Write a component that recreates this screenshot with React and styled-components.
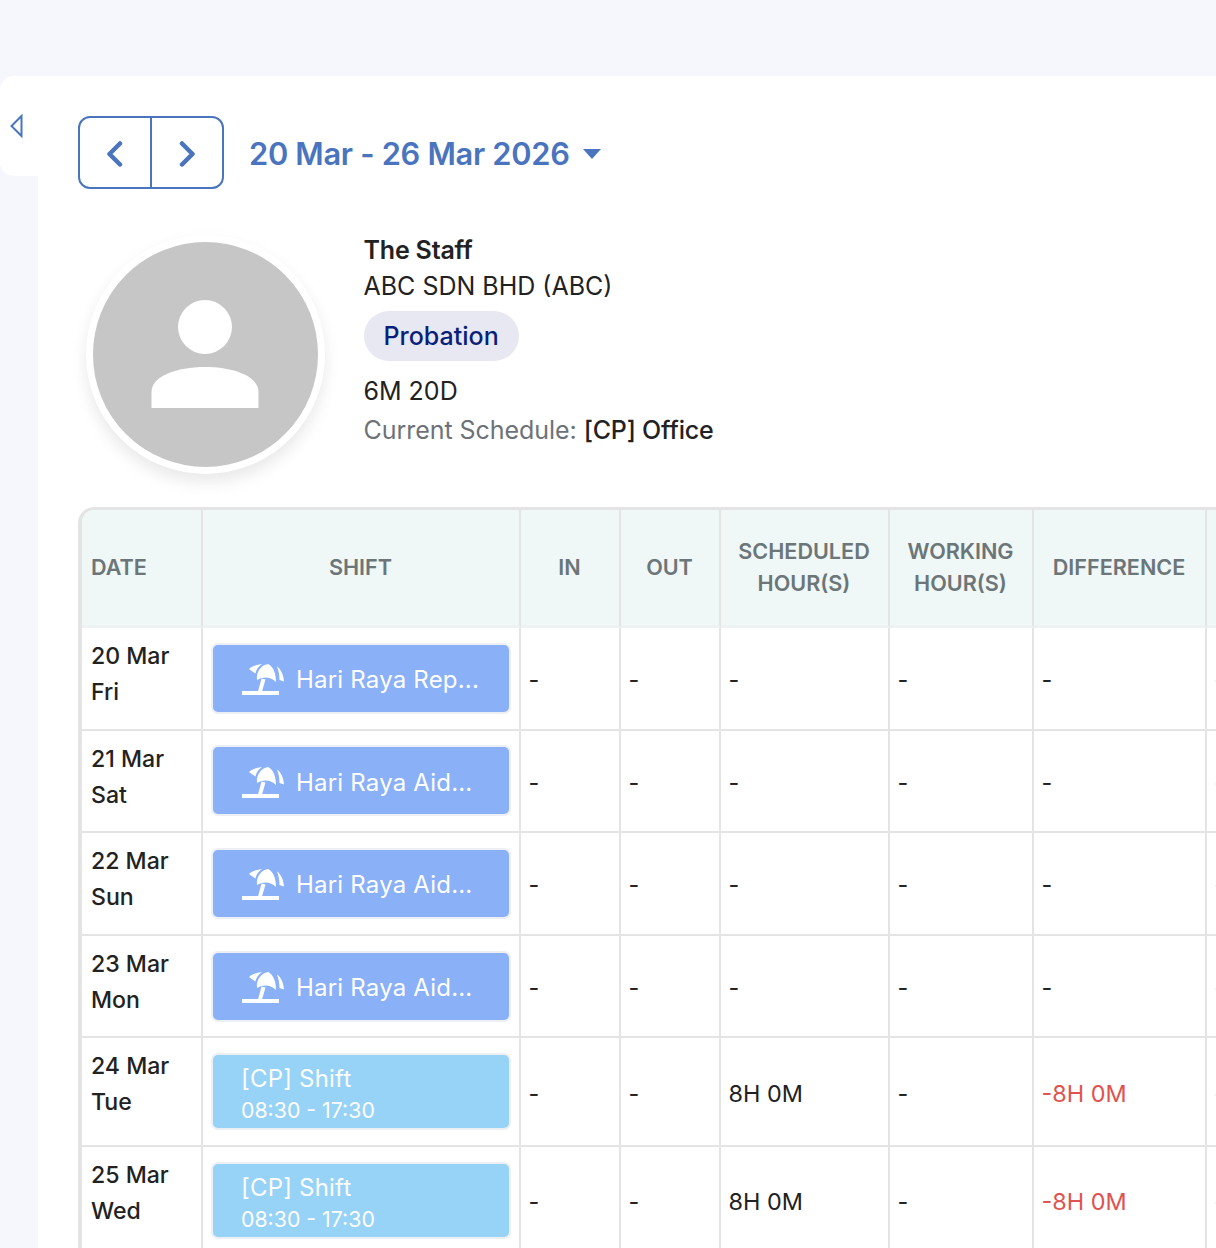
import React from "react";
import styled, { createGlobalStyle } from "styled-components";

const GlobalStyle = createGlobalStyle`
  * { box-sizing: border-box; }
  html, body { margin: 0; padding: 0; }
  body {
    background: #f5f7fc;
    color: #222;
    font-family: Inter, "Noto Sans", sans-serif;
  }
`;

const Page = styled.div`
  width: 1216px;
  height: 1248px;
  padding-top: 76px;
  overflow: hidden;
  display: flex;
`;

const Rail = styled.div`
  width: 38px;
  flex: none;
`;

const RailTab = styled.button`
  width: 38px;
  height: 100px;
  padding: 0 0 0 10px;
  border: none;
  border-radius: 14px 0 0 14px;
  background: #fff;
  display: flex;
  align-items: flex-start;
  svg { margin-top: 38px; }
`;

const Main = styled.main`
  flex: 1;
  min-width: 0;
  background: #fff;
  padding: 40px 0 0 40px;
`;

const Toolbar = styled.div`
  display: flex;
  align-items: center;
  gap: 25px;
`;

const Pager = styled.div`
  width: 146px;
  height: 73px;
  border: 2px solid #4a74bd;
  border-radius: 12px;
  display: flex;
`;

const PagerButton = styled.button`
  flex: 1;
  border: none;
  background: none;
  padding: 2px 0 0;
  display: flex;
  align-items: center;
  justify-content: center;
  & + & { border-left: 2px solid #4a74bd; }
`;

const DateRange = styled.div`
  display: flex;
  align-items: center;
  gap: 13px;
  padding-top: 1px;
  color: #4a74bd;
  font-size: 30.8px;
  font-weight: 600;
  letter-spacing: -0.3px;
`;

const Caret = styled.span`
  width: 0;
  height: 0;
  margin-top: 2px;
  border-left: 9px solid transparent;
  border-right: 9px solid transparent;
  border-top: 10px solid #4a74bd;
`;

const Profile = styled.section`
  display: flex;
  margin-top: 46px;
  height: 272px;
`;

const Avatar = styled.div`
  width: 239px;
  height: 239px;
  margin-left: 7.5px;
  border-radius: 50%;
  background: #c6c6c6;
  border: 7.5px solid #fff;
  box-shadow: 0 8px 16px rgba(0, 0, 0, 0.09);
  overflow: hidden;
  flex: none;
`;

const Info = styled.div`
  margin: -3px 0 0 39px;
  font-size: 25px;
  line-height: 36px;
  color: #222;
`;

const Name = styled.div`
  font-weight: 600;
  letter-spacing: -0.2px;
`;

const Badge = styled.div`
  display: inline-flex;
  align-items: center;
  height: 50px;
  margin: 7px 0 12px;
  padding: 0 20px;
  border-radius: 25px;
  background: #e8e8f3;
  color: #0a1f7a;
  font-weight: 500;
`;

const ScheduleLine = styled.div`
  margin-top: 3px;
`;

const Muted = styled.span`
  color: #6c7278;
  letter-spacing: -0.05px;
`;

const Strong = styled.span`
  font-weight: 500;
  letter-spacing: -0.2px;
`;

const Table = styled.table`
  table-layout: fixed;
  width: 1126px;
  border-collapse: separate;
  border-spacing: 0;
  border-top: 3px solid #e4e4e4;
  border-left: 4px solid #e4e4e4;
  border-top-left-radius: 16px;
`;

const Th = styled.th`
  height: 118px;
  padding: 0 9px 2px 8px;
  background: #eff7f7;
  border-right: 2px solid #e4e4e4;
  border-bottom: 3px solid #eef2f5;
  color: #6c7678;
  font-size: 21.6px;
  font-weight: 600;
  line-height: 32px;
  text-align: center;
  &:first-child {
    padding-left: 9px;
    border-top-left-radius: 12px;
    text-align: left;
  }
`;

const Td = styled.td`
  padding: 3px 8px 0 7.5px;
  border-right: 2px solid #e4e4e4;
  border-bottom: 2px solid #e4e4e4;
  font-size: 23.4px;
  font-weight: 400;
  color: ${(p) => (p.$negative ? "#e0524f" : "#222")};
  vertical-align: middle;
`;

const DateCell = styled(Td)`
  padding: 10px 0 0 9px;
  font-size: 23.1px;
  line-height: 36px;
  font-weight: 500;
  vertical-align: top;
`;

const ShiftCell = styled(Td)`
  padding: ${(p) => (p.$holiday ? "14.8px" : "14.6px")} 8px;
`;

const Chip = styled.div`
  height: ${(p) => (p.$holiday ? "71px" : "77.5px")};
  padding: ${(p) => (p.$holiday ? "4px 0 0 29px" : "5px 0 0 28px")};
  border: 2px solid #eceff4;
  border-radius: 7px;
  background: ${(p) => (p.$holiday ? "#8ab0f8" : "#97d2f7")};
  color: #fff;
  display: flex;
  flex-direction: ${(p) => (p.$holiday ? "row" : "column")};
  align-items: ${(p) => (p.$holiday ? "center" : "flex-start")};
  justify-content: ${(p) => (p.$holiday ? "flex-start" : "center")};
  gap: ${(p) => (p.$holiday ? "12px" : "0")};
`;

const ChipLabel = styled.span`
  font-size: 24px;
  line-height: 32px;
  letter-spacing: 0.2px;
`;

const ChipTime = styled.span`
  font-size: 21.3px;
  line-height: 30px;
`;

const colWidths = [121, 318, 100, 100, 169, 144, 173, 200];

const rows = [
  { date: "20 Mar", day: "Fri", name: "Hari Raya Rep...", holiday: true },
  { date: "21 Mar", day: "Sat", name: "Hari Raya Aid...", holiday: true },
  { date: "22 Mar", day: "Sun", name: "Hari Raya Aid...", holiday: true },
  { date: "23 Mar", day: "Mon", name: "Hari Raya Aid...", holiday: true },
  { date: "24 Mar", day: "Tue", name: "[CP] Shift", time: "08:30 - 17:30", scheduled: "8H 0M", difference: "-8H 0M" },
  { date: "25 Mar", day: "Wed", name: "[CP] Shift", time: "08:30 - 17:30", scheduled: "8H 0M", difference: "-8H 0M" },
];

function UmbrellaIcon() {
  return (
    <svg width="42" height="32" viewBox="0 0 42 32" fill="#fff" style={{ flex: "none" }}>
      <rect x="0" y="27" width="37" height="4" />
      <path d="M19.5 14.5 L23.5 15.5 L20 27.5 L16 27.5 Z" />
      <path d="M15 16 C14 8 19 1 26 0 C31 2 34 9 34 18 C29 13 22 12 15 16 Z" />
      <path d="M7 5 C10 2 15 0.5 20 0 C16 3 14 6 13.5 9.5 C11 8 9 6.5 7 5 Z" />
      <path d="M35 2.5 C39 5 41.5 11 42 17.5 L37.5 16 C37.5 11 36.5 6 35 2.5 Z" />
    </svg>
  );
}

function Chevron({ dir }) {
  return (
    <svg width="18" height="26" viewBox="0 0 18 26" fill="none" stroke="#4a74bd" strokeWidth="4.5" strokeLinecap="round" strokeLinejoin="round">
      <path d={dir === "left" ? "M14 2.500 L3.500 13 L14 23.500" : "M4 2.500 L14.500 13 L4 23.500"} />
    </svg>
  );
}

function App() {
  return (
    <>
      <GlobalStyle />
      <Page>
        <Rail>
          <RailTab>
            <svg width="13" height="24" viewBox="0 0 13 24" fill="none" stroke="#4a74bd" strokeWidth="2">
              <path d="M11.5 2 L1.5 12 L11.5 22 Z" />
            </svg>
          </RailTab>
        </Rail>
        <Main>
          <Toolbar>
            <Pager>
              <PagerButton><Chevron dir="left" /></PagerButton>
              <PagerButton><Chevron dir="right" /></PagerButton>
            </Pager>
            <DateRange>
              20 Mar - 26 Mar 2026
              <Caret />
            </DateRange>
          </Toolbar>

          <Profile>
            <Avatar>
              <svg width="224" height="224" viewBox="0 0 224 224" fill="#fff">
                <circle cx="112" cy="85" r="27" />
                <path d="M58.500 166 L58.500 150 C58.500 134 84 125 112 125 C140 125 165.500 134 165.500 150 L165.500 166 Z" />
              </svg>
            </Avatar>
            <Info>
              <Name>The Staff</Name>
              <div>ABC SDN BHD (ABC)</div>
              <Badge>Probation</Badge>
              <div>6M 20D</div>
              <ScheduleLine>
                <Muted>Current Schedule: </Muted>
                <Strong>[CP] Office</Strong>
              </ScheduleLine>
            </Info>
          </Profile>

          <Table>
            <colgroup>
              {colWidths.map((w, i) => (
                <col key={i} width={w} />
              ))}
            </colgroup>
            <thead>
              <tr>
                <Th>DATE</Th>
                <Th>SHIFT</Th>
                <Th>IN</Th>
                <Th>OUT</Th>
                <Th>SCHEDULED HOUR(S)</Th>
                <Th>WORKING HOUR(S)</Th>
                <Th>DIFFERENCE</Th>
                <Th />
              </tr>
            </thead>
            <tbody>
              {rows.map((r) => (
                <tr key={r.date}>
                  <DateCell>
                    {r.date}
                    <br />
                    {r.day}
                  </DateCell>
                  <ShiftCell $holiday={r.holiday}>
                    <Chip $holiday={r.holiday}>
                      {r.holiday && <UmbrellaIcon />}
                      <ChipLabel>{r.name}</ChipLabel>
                      {r.time && <ChipTime>{r.time}</ChipTime>}
                    </Chip>
                  </ShiftCell>
                  <Td>-</Td>
                  <Td>-</Td>
                  <Td>{r.scheduled || "-"}</Td>
                  <Td>-</Td>
                  <Td $negative={!!r.difference}>{r.difference || "-"}</Td>
                  <Td>-</Td>
                </tr>
              ))}
            </tbody>
          </Table>
        </Main>
      </Page>
    </>
  );
}

export default App;
